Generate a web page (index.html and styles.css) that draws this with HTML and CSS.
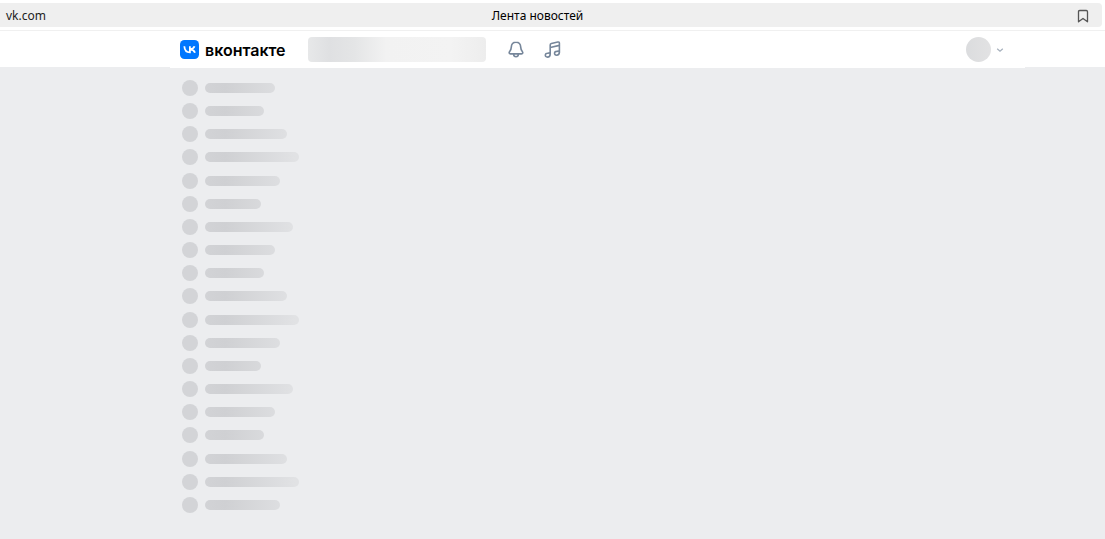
FILE: index.html
```
<!DOCTYPE html>
<html lang="ru">
<head>
	<meta charset="UTF-8">
	<title>Лента новостей</title>
	<link rel="stylesheet" href="styles.css">
</head>
<body>
	<div class="browser_bar">
		<div class="address">
			<a class="host" href="#">vk.com</a>
			<span class="page_title">Лента новостей</span>
			<button class="bookmark" type="button" aria-label="Закладка">
				<svg width="12" height="14" viewBox="0 0 12 14"><path d="M1.5 12.8V2.7Q1.5 1.5 2.7 1.5H9.3Q10.5 1.5 10.5 2.7V12.8L6 9.4Z"/></svg>
			</button>
		</div>
	</div>
	<header class="header">
		<div class="header_inner">
			<a class="logo" href="#">
				<svg width="19" height="19" viewBox="0 0 19 19">
					<rect width="19" height="19" rx="4.5" fill="#07f"/>
					<path d="M4.3 6.2C4.6 10 6.4 12.4 9.9 12.4V6.2M14.5 6.2C13.9 7.9 12.4 9 10 9.1C12.6 9.4 14.2 10.6 15 12.7" fill="none" stroke="#fff" stroke-width="1.8"/>
				</svg>
				<span>вконтакте</span>
			</a>
			<div class="search"></div>
			<button class="icon" type="button" aria-label="Уведомления">
				<svg width="16" height="18" viewBox="0 0 16 18"><path d="M8 1.3C5 1.3 3.4 3.5 3.3 6.1C3.2 8.5 2.8 9.1 1.7 10.4C.8 11.5 1.1 12.9 2.5 12.9H13.5C14.9 12.9 15.2 11.5 14.3 10.4C13.2 9.1 12.8 8.5 12.7 6.1C12.6 3.5 11 1.3 8 1.3ZM5.6 13.2C5.8 16.5 10.2 16.5 10.4 13.2"/></svg>
			</button>
			<button class="icon" type="button" aria-label="Музыка">
				<svg width="17" height="18" viewBox="0 0 17 18"><path d="M6.2 13.2V4Q6.2 2.8 7.4 2.5L13.8 1Q15.4 .7 15.4 2.2V11.3M6.2 6.5L15.4 4.4"/><path d="M6.2 12.9C6.2 15.1 5.2 16.1 3.4 16.1C.6 16.1.7 12.5 3.4 12.3L6.2 11.9M15.4 11C15.4 13.2 14.4 14.2 12.6 14.2C9.8 14.2 9.9 10.6 12.6 10.4L15.4 10"/></svg>
			</button>
			<button class="profile" type="button" aria-label="Профиль">
				<span class="avatar"></span>
				<svg width="8" height="6" viewBox="0 0 8 6"><path d="M1.2 1.7L4 4.2L6.8 1.7"/></svg>
			</button>
		</div>
	</header>
	<main class="page">
		<ul class="menu">
			<li></li>
			<li></li>
			<li></li>
			<li></li>
			<li></li>
			<li></li>
			<li></li>
			<li></li>
			<li></li>
			<li></li>
			<li></li>
			<li></li>
			<li></li>
			<li></li>
			<li></li>
			<li></li>
			<li></li>
			<li></li>
			<li></li>
		</ul>
	</main>
</body>
</html>
```
FILE: styles.css
```
*{margin:0;padding:0;box-sizing:border-box}
li{list-style:none}
a{color:inherit;text-decoration:none}
button{border:0;background:none;cursor:pointer}
svg{display:block}
body{
	display:flex;
	flex-direction:column;
	min-height:100vh;
	background:#ecedef;
	font-family:"Noto Sans","Open Sans",sans-serif;
}
.browser_bar{
	padding:3px 3px 3px 0;
	background:#fff;
	border-bottom:1px solid #f0f0f0;
}
.address{
	display:grid;
	grid-template-columns:1fr auto 1fr 20px;
	align-items:center;
	height:24px;
	padding:2px 13px 0 6px;
	border-radius:0 4px 4px 0;
	background:#efefef;
	font-size:12px;
	line-height:22px;
	color:#222;
}
.page_title{color:#000}
.bookmark{
	grid-column:4;
	justify-self:end;
}
.bookmark svg{
	fill:none;
	stroke:#555;
	stroke-width:1.3;
	stroke-linejoin:round;
}
/* шапка */
.header{
	height:36px;
	padding:0 80px 0 170px;
	background:#fff;
}
.header_inner{
	display:flex;
	align-items:center;
	height:37px;
	padding:0 21px 0 10px;
	background:#fff;
}
.logo{
	display:flex;
	align-items:center;
	gap:6px;
	width:128px;
	font:600 16px/18px Inter,sans-serif;
	color:#000;
}
.search{
	width:178px;
	height:25px;
	margin-right:22px;
	border-radius:4px;
	background:linear-gradient(90deg,#e7e8e9 0,#dfe0e2 12%,#e4e5e6 26%,#f2f2f2 44%,#f3f3f3 80%,#ededed 100%);
}
.icon{
	margin-right:20px;
}
.icon svg{
	fill:none;
	stroke:#76869a;
	stroke-width:1.6;
	stroke-linejoin:round;
}
.profile{
	display:flex;
	align-items:center;
	gap:5px;
	margin-left:auto;
}
.avatar{
	width:25px;
	height:25px;
	border-radius:50%;
	background:linear-gradient(90deg,#dbdcde,#e2e2e3);
}
.profile svg{
	fill:none;
	stroke:#a5afbc;
	stroke-width:1.2;
}
/* меню слева */
.page{
	display:flex;
	flex:1;
	padding:13px 80px 26px 182px;
}
.menu{
	display:flex;
	flex-direction:column;
	justify-content:space-between;
}
.menu li{
	display:flex;
	align-items:center;
	gap:7px;
}
.menu li::before{
	content:"";
	width:16px;
	height:16px;
	border-radius:50%;
	background:#d3d4d7;
}
.menu li::after{
	content:"";
	width:70px;
	height:10px;
	border-radius:5px;
	background:linear-gradient(90deg,#d2d3d6 0,#cfd0d3 20px,#e1e2e4 90px) 0 0/94px 100%;
}
.menu li:nth-child(7n+2)::after{width:59px}
.menu li:nth-child(7n+3)::after{width:82px}
.menu li:nth-child(7n+4)::after{width:94px}
.menu li:nth-child(7n+5)::after{width:75px}
.menu li:nth-child(7n+6)::after{width:56px}
.menu li:nth-child(7n)::after{width:88px}
```
